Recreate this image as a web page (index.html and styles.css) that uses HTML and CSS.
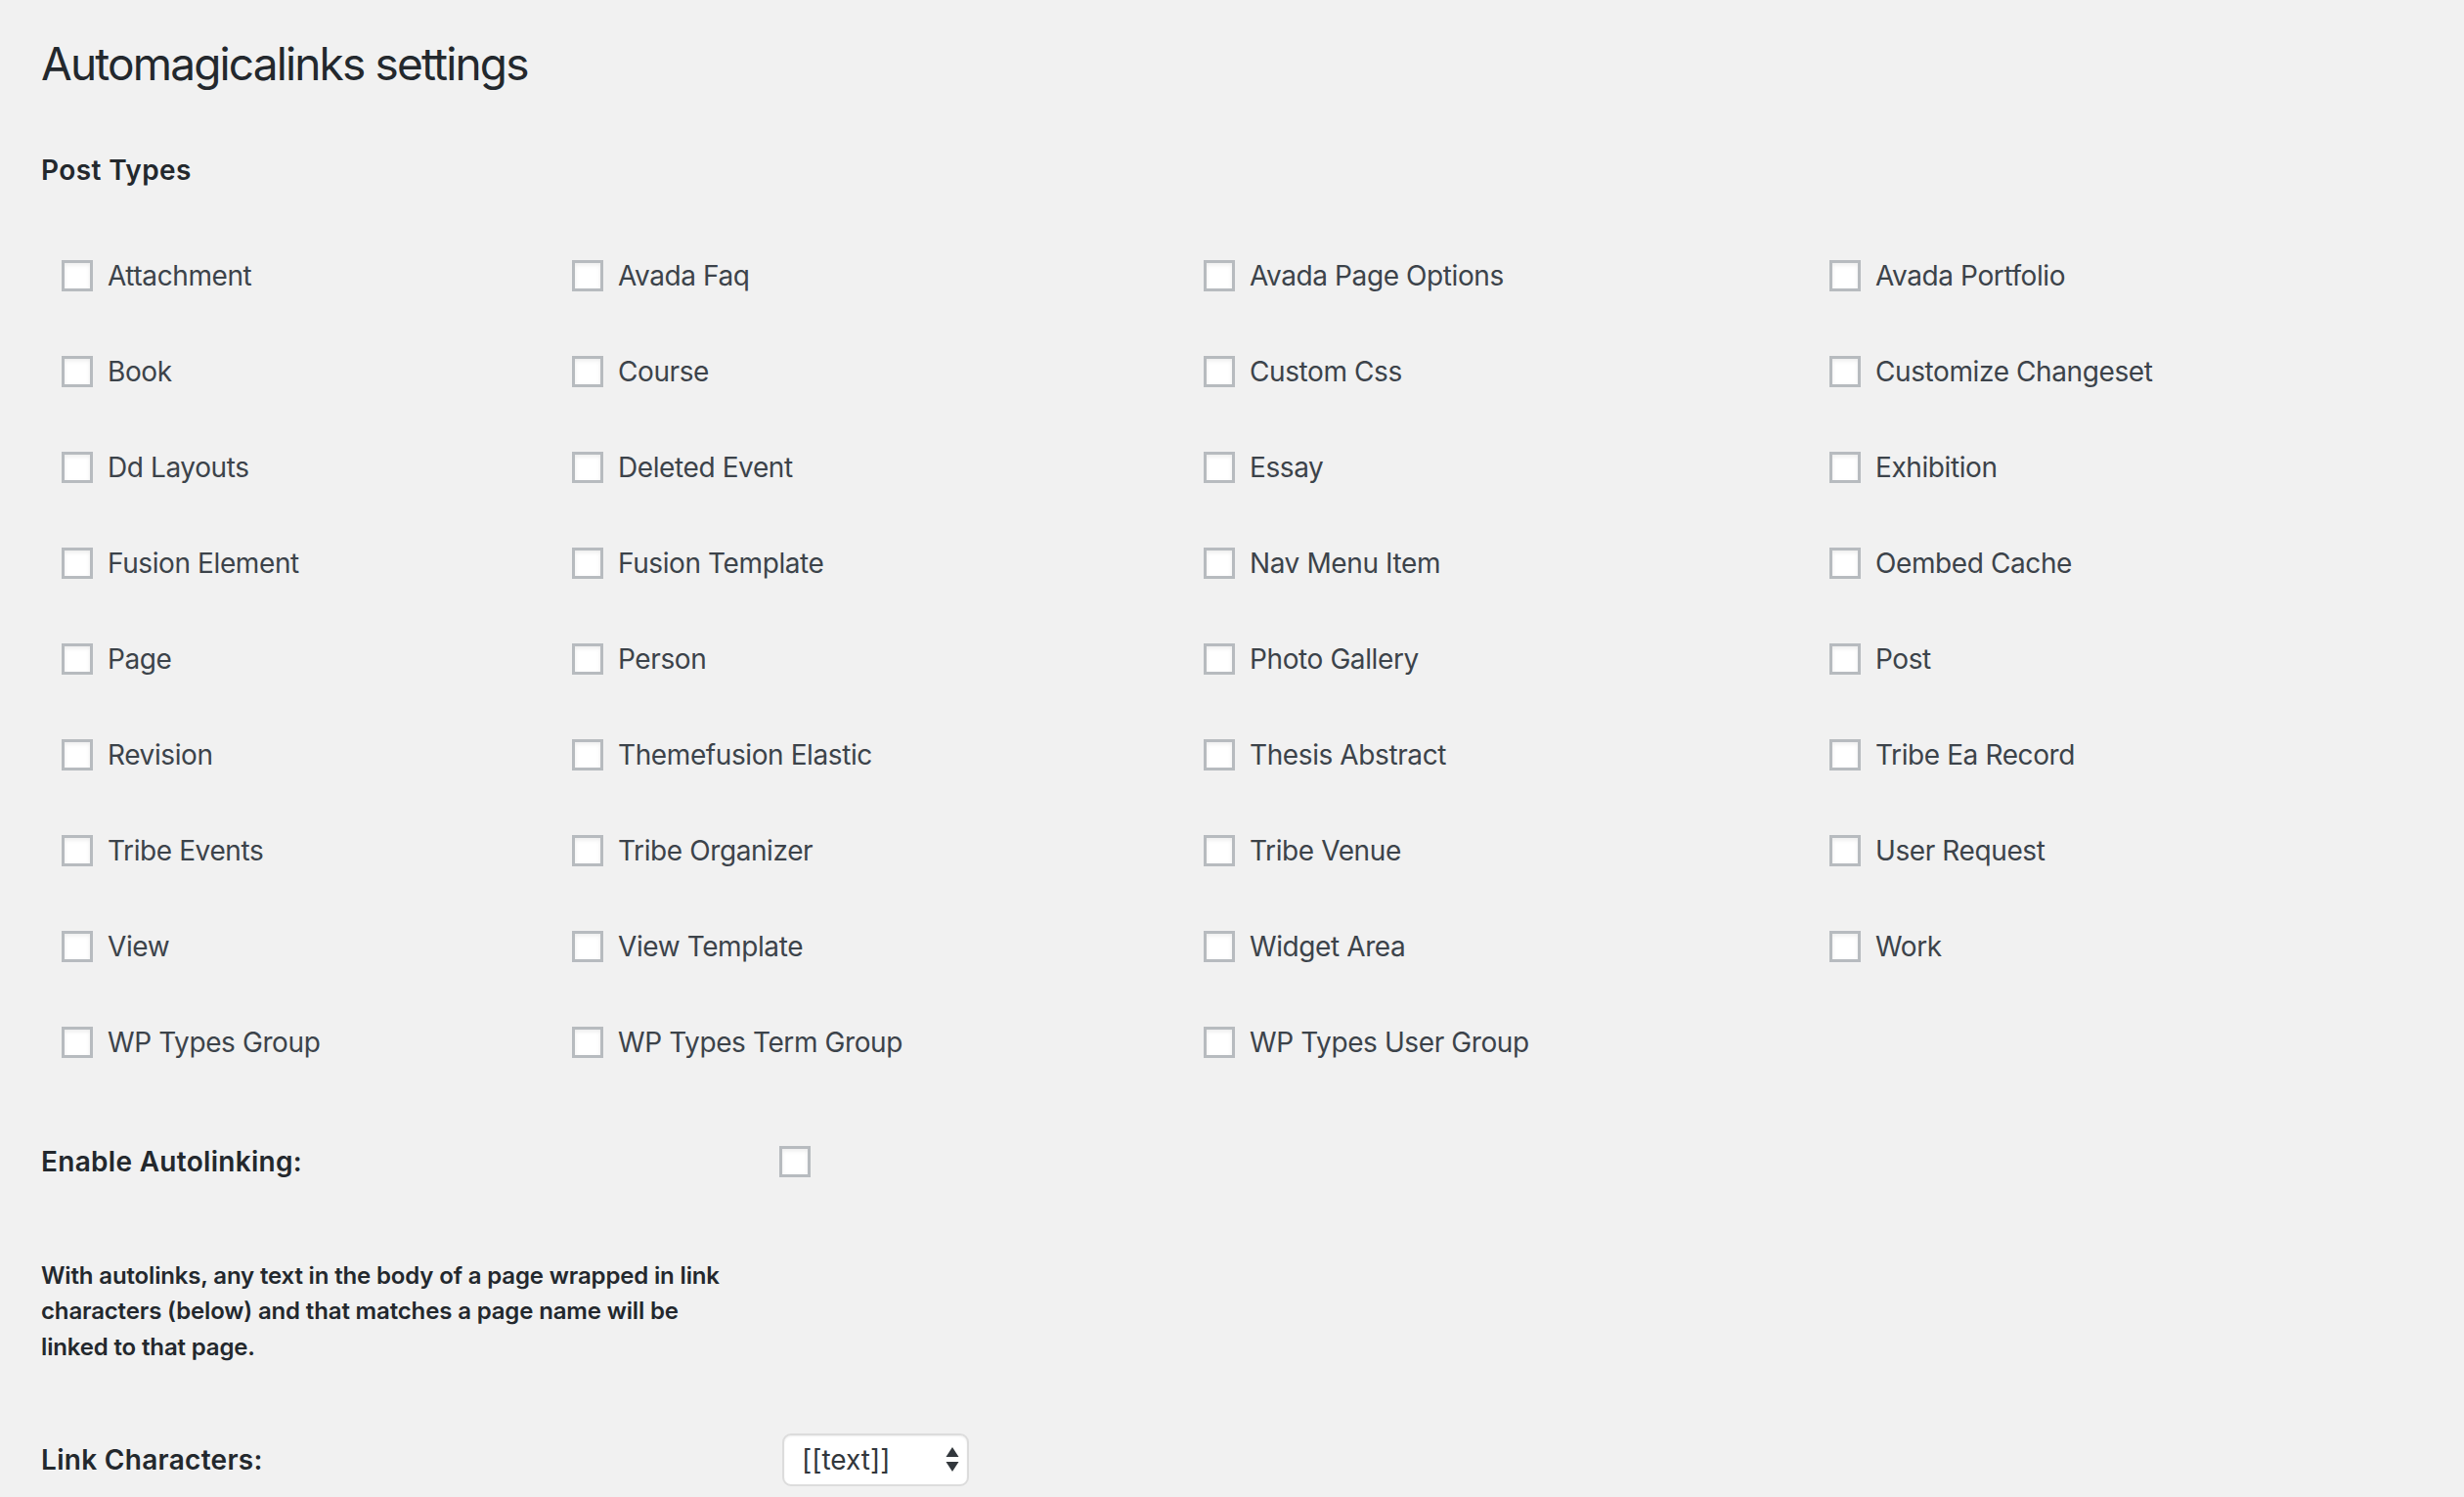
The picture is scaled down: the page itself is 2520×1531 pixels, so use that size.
FILE: index.html
```html
<!DOCTYPE html>
<html lang="en">
<head>
<meta charset="utf-8">
<title>Automagicalinks settings</title>
<link rel="stylesheet" href="styles.css">
</head>
<body>
<div class="wrap">
  <h1 class="page-title">Automagicalinks settings</h1>
  <h2 class="section-title">Post Types</h2>
  <div class="post-types">
    <label class="opt"><input type="checkbox"><span>Attachment</span></label>
    <label class="opt"><input type="checkbox"><span>Avada Faq</span></label>
    <label class="opt"><input type="checkbox"><span>Avada Page Options</span></label>
    <label class="opt"><input type="checkbox"><span>Avada Portfolio</span></label>

    <label class="opt"><input type="checkbox"><span>Book</span></label>
    <label class="opt"><input type="checkbox"><span>Course</span></label>
    <label class="opt"><input type="checkbox"><span>Custom Css</span></label>
    <label class="opt"><input type="checkbox"><span>Customize Changeset</span></label>

    <label class="opt"><input type="checkbox"><span>Dd Layouts</span></label>
    <label class="opt"><input type="checkbox"><span>Deleted Event</span></label>
    <label class="opt"><input type="checkbox"><span>Essay</span></label>
    <label class="opt"><input type="checkbox"><span>Exhibition</span></label>

    <label class="opt"><input type="checkbox"><span>Fusion Element</span></label>
    <label class="opt"><input type="checkbox"><span>Fusion Template</span></label>
    <label class="opt"><input type="checkbox"><span>Nav Menu Item</span></label>
    <label class="opt"><input type="checkbox"><span>Oembed Cache</span></label>

    <label class="opt"><input type="checkbox"><span>Page</span></label>
    <label class="opt"><input type="checkbox"><span>Person</span></label>
    <label class="opt"><input type="checkbox"><span>Photo Gallery</span></label>
    <label class="opt"><input type="checkbox"><span>Post</span></label>

    <label class="opt"><input type="checkbox"><span>Revision</span></label>
    <label class="opt"><input type="checkbox"><span>Themefusion Elastic</span></label>
    <label class="opt"><input type="checkbox"><span>Thesis Abstract</span></label>
    <label class="opt"><input type="checkbox"><span>Tribe Ea Record</span></label>

    <label class="opt"><input type="checkbox"><span>Tribe Events</span></label>
    <label class="opt"><input type="checkbox"><span>Tribe Organizer</span></label>
    <label class="opt"><input type="checkbox"><span>Tribe Venue</span></label>
    <label class="opt"><input type="checkbox"><span>User Request</span></label>

    <label class="opt"><input type="checkbox"><span>View</span></label>
    <label class="opt"><input type="checkbox"><span>View Template</span></label>
    <label class="opt"><input type="checkbox"><span>Widget Area</span></label>
    <label class="opt"><input type="checkbox"><span>Work</span></label>

    <label class="opt"><input type="checkbox"><span>WP Types Group</span></label>
    <label class="opt"><input type="checkbox"><span>WP Types Term Group</span></label>
    <label class="opt"><input type="checkbox"><span>WP Types User Group</span></label>
  </div>

  <div class="field-row enable-row">
    <div class="field-label">Enable Autolinking:</div>
    <div class="field-control"><input type="checkbox" class="cb-single"></div>
  </div>

  <p class="help">With autolinks, any text in the body of a page wrapped in link characters (below) and that matches a page name will be linked to that page.</p>

  <div class="field-row chars-row">
    <div class="field-label">Link Characters:</div>
    <div class="field-control">
      <div class="select-wrap">
        <select class="select">
          <option>[[text]]</option>
          <option>{{text}}</option>
        </select>
        <svg class="select-arrows" width="14" height="26" viewBox="0 0 14 26" aria-hidden="true">
          <path d="M7 0 L13.5 10 L0.5 10 Z" fill="#32373c"/>
          <path d="M0.5 15 L13.5 15 L7 25 Z" fill="#32373c"/>
        </svg>
      </div>
    </div>
  </div>
</div>
</body>
</html>
```

FILE: styles.css
```css
html, body {
  margin: 0;
  padding: 0;
  background: #f1f1f1;
}

body {
  font-family: Inter, "Noto Sans", "Liberation Sans", sans-serif;
  color: #444;
}

.wrap {
  padding: 35px 0 0 42px;
}

.page-title {
  margin: 0;
  font-size: 46px;
  line-height: 60px;
  font-weight: 400;
  color: #23282d;
  letter-spacing: -1.85px;
}

.section-title {
  margin: 61px 0 0;
  font-size: 28px;
  line-height: 36px;
  font-weight: 600;
  color: #23282d;
  letter-spacing: 0.4px;
}

.post-types {
  margin: 41px 0 0 21px;
  display: grid;
  grid-template-columns: 522px 646px 640px 1fr;
  grid-auto-rows: 98px;
}

.opt {
  display: flex;
  align-items: center;
  gap: 15px;
  font-size: 28px;
  line-height: 36px;
  color: #3c434a;
  letter-spacing: -0.4px;
}

input[type="checkbox"] {
  -webkit-appearance: none;
  appearance: none;
  margin: 0;
  width: 32px;
  height: 32px;
  flex: none;
  box-sizing: border-box;
  background: #fff;
  border: 3px solid #b7bbbf;
  box-shadow: inset 0 2px 4px rgba(0, 0, 0, 0.08);
}

.field-row {
  display: flex;
  align-items: center;
}

.field-label {
  width: 755px;
  flex: none;
  font-size: 28px;
  line-height: 36px;
  font-weight: 600;
  color: #23282d;
  letter-spacing: 0.3px;
}

.field-control {
  display: flex;
  align-items: center;
}

.enable-row {
  margin-top: 41px;
  height: 64px;
}

.help {
  margin: 67px 0 0;
  width: 715px;
  font-size: 24px;
  line-height: 36.4px;
  font-weight: 600;
  color: #23282d;
  letter-spacing: -0.15px;
}

.chars-row {
  margin-top: 67px;
  height: 60px;
}

.select-wrap {
  position: relative;
  margin-left: 3px;
}

.select {
  -webkit-appearance: none;
  appearance: none;
  width: 191px;
  height: 54px;
  box-sizing: border-box;
  margin: 0;
  padding: 0 40px 0 18px;
  border: 2px solid #dcdcdc;
  border-radius: 9px;
  background: #fff;
  box-shadow: inset 0 1px 2px rgba(0, 0, 0, 0.07);
  font-family: Inter, "Noto Sans", "Liberation Sans", sans-serif;
  font-size: 28px;
  color: #32373c;
}

.select-arrows {
  position: absolute;
  right: 10px;
  top: 14px;
  pointer-events: none;
}
```
